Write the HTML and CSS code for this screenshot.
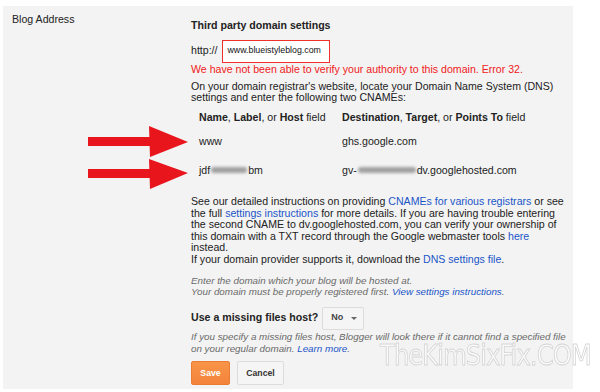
FILE: index.html
```html
<!DOCTYPE html>
<html lang="en">
<head>
    <meta charset="UTF-8">
    <title>Blog Address settings</title>
    <link rel="stylesheet" href="styles.css">
</head>
<body>
    <div class="panel">
        <div class="label-col">Blog Address</div>

        <div class="content">
            <h3 class="title">Third party domain settings</h3>

            <div class="url-row">
                <span>http://</span>
                <span class="url-input">www.blueistyleblog.com</span>
            </div>

            <p class="error">We have not been able to verify your authority to this domain. Error 32.</p>

            <p class="intro">On your domain registrar's website, locate your Domain Name System (DNS) settings and enter the following two CNAMEs:</p>

            <div class="cname">
                <div class="cname-row head">
                    <div class="col-name"><b>Name</b>, <b>Label</b>, or <b>Host</b> field</div>
                    <div><b>Destination</b>, <b>Target</b>, or <b>Points To</b> field</div>
                </div>
                <div class="cname-row first">
                    <div class="col-name">www</div>
                    <div>ghs.google.com</div>
                </div>
                <div class="cname-row second">
                    <div class="col-name">jdf<span class="blur w38"></span>bm</div>
                    <div>gv-<span class="blur w60"></span>dv.googlehosted.com</div>
                </div>
            </div>

            <p class="details">See our detailed instructions on providing <a href="#">CNAMEs for various registrars</a> or see the full <a href="#">settings instructions</a> for more details. If you are having trouble entering the second CNAME to dv.googlehosted.com, you can verify your ownership of this domain with a TXT record through the Google webmaster tools <a href="#">here</a> instead.<br>If your domain provider supports it, download the <a href="#">DNS settings file</a>.</p>

            <p class="hint first-hint">Enter the domain which your blog will be hosted at.<br>Your domain must be properly registered first. <a href="#">View settings instructions</a>.</p>

            <div class="host-row">
                <span class="host-label">Use a missing files host?</span>
                <span class="dropdown">No <span class="caret"></span></span>
            </div>

            <p class="hint">If you specify a missing files host, Blogger will look there if it cannot find a specified file on your regular domain. <a href="#">Learn more</a>.</p>

            <div class="buttons">
                <button class="btn save">Save</button>
                <button class="btn cancel">Cancel</button>
            </div>
        </div>
    </div>

    <!-- annotation arrows drawn over the screenshot -->
    <svg class="arrows" width="600" height="392" viewBox="0 0 600 392">
        <rect x="88" y="137" width="64" height="9" fill="#e8151d"/>
        <polygon points="149,126 188,142 150,157" fill="#e8151d"/>
        <rect x="88" y="169" width="64" height="9" fill="#e8151d"/>
        <polygon points="149,159 188,173 150,189" fill="#e8151d"/>
    </svg>

    <div class="watermark">TheKimSixFix.COM</div>
</body>
</html>
```

FILE: styles.css
```css
body {
    margin: 0;
    width: 600px;
    height: 392px;
    overflow: hidden;
    position: relative;
    background: #fff;
    font-family: "Liberation Sans", Arial, sans-serif;
    font-size: 10.6px;
    line-height: 11.6px;
    color: #222;
}

.panel {
    display: flex;
    width: 570px;
    height: 383px;
    margin: 6px 0 0 3px;
    background: #f3f3f3;
}

.label-col {
    width: 179px;
    padding: 8px 0 0 9px;
}

.content {
    width: 375px;
    padding-top: 14px;
}

.title {
    margin: 0;
    font-size: 10.6px;
    font-weight: bold;
}

.url-row {
    display: flex;
    align-items: center;
    gap: 4px;
    margin-top: 8px;
    height: 23px;
}

.url-input {
    display: flex;
    align-items: center;
    box-sizing: border-box;
    width: 108px;
    height: 23px;
    padding-left: 5px;
    background: #fff;
    border: 1px solid #f0302a;
    font-size: 8.8px;
    color: #111;
}

p {
    margin: 0;
}

.error {
    margin-top: 1.5px;
    color: #f0201a;
}

.intro {
    margin-top: 5px;
}

.cname {
    margin-top: 8px;
    padding-left: 8px;
}

.cname-row {
    display: flex;
}

.col-name {
    width: 143px;
}

.cname-row.head {
    margin-bottom: 13px;
}

.cname-row.first {
    margin-bottom: 17px;
}

.blur {
    display: inline-block;
    height: 6px;
    margin-bottom: 1px;
    background: #a0a0a0;
    border-radius: 3px;
    filter: blur(1.5px);
}

.w38 {
    width: 36px;
    margin-left: 1px;
    margin-right: 1px;
}

.w60 {
    width: 58px;
    margin-left: 1px;
    margin-right: 1px;
}

.details {
    margin-top: 19.4px;
}

a {
    color: #1a55c8;
    text-decoration: none;
}

.hint {
    font-size: 9.8px;
    line-height: 11.5px;
    font-style: italic;
    color: #6a6a6a;
}

.first-hint {
    margin-top: 9px;
}

.host-row {
    display: flex;
    align-items: center;
    gap: 4px;
    margin-top: 9px;
}

.host-label {
    font-weight: bold;
}

.dropdown {
    display: flex;
    align-items: center;
    box-sizing: border-box;
    width: 42px;
    height: 23px;
    padding-left: 8px;
    background: #f5f5f5;
    border: 1px solid #dcdcdc;
    border-radius: 2px;
    font-size: 9px;
    font-weight: bold;
    color: #444;
}

.caret {
    margin-left: 8px;
    border-left: 3px solid transparent;
    border-right: 3px solid transparent;
    border-top: 3px solid #666;
}

.host-row + .hint {
    margin-top: 1.5px;
}

.buttons {
    display: flex;
    gap: 7px;
    margin-top: 7px;
}

.btn {
    box-sizing: border-box;
    height: 24px;
    padding: 0;
    border-radius: 2px;
    font-family: "Liberation Sans", Arial, sans-serif;
    font-size: 8.7px;
    font-weight: bold;
}

.save {
    width: 39px;
    color: #fff;
    background: linear-gradient(#f89449, #f3843a);
    border: 1px solid #ec7c33;
}

.cancel {
    width: 47px;
    color: #333;
    background: #f5f5f5;
    border: 1px solid #dcdcdc;
}

.arrows {
    position: absolute;
    left: 0;
    top: 0;
    pointer-events: none;
}

.watermark {
    position: absolute;
    left: 380px;
    top: 350px;
    font-family: "DejaVu Sans Condensed", "DejaVu Sans", sans-serif;
    font-size: 29px;
    font-weight: 200;
    letter-spacing: -1px;
    color: rgba(255, 255, 255, 0.6);
    -webkit-text-stroke: 0.8px #d4d4d4;
    white-space: nowrap;
    transform: scaleX(0.93);
    transform-origin: left top;
}
```
